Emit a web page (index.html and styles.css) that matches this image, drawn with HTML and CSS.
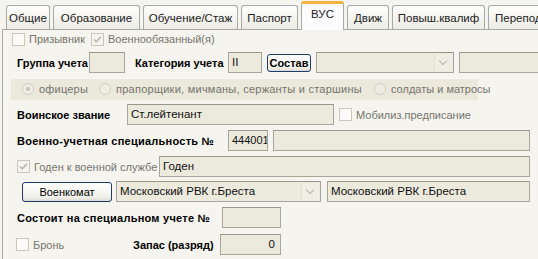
FILE: index.html
```html
<!DOCTYPE html>
<html lang="ru">
<head>
  <meta charset="UTF-8">
  <title>ВУС</title>
  <link rel="stylesheet" href="styles.css">
</head>
<body>
  <div class="tabs">
    <div class="tab tab-a">Общие</div>
    <div class="tab tab-b">Образование</div>
    <div class="tab tab-c">Обучение/Стаж</div>
    <div class="tab tab-d">Паспорт</div>
    <div class="tab tab-e active">ВУС</div>
    <div class="tab tab-f">Движ</div>
    <div class="tab tab-g">Повыш.квалиф</div>
    <div class="tab tab-h">Переподг</div>
  </div>

  <div class="panel">
    <div class="row row-checks">
      <span class="check"></span><span class="dim lbl-conscript">Призывник</span>
      <span class="check checked"><svg viewBox="0 0 11 11"><path d="M2 5.5l2.2 2.3L9 2.8" /></svg></span><span class="dim">Военнообязанный(я)</span>
    </div>

    <div class="row">
      <label class="lbl w-group">Группа учета</label>
      <div class="field w36"></div>
      <label class="lbl w-cat">Категория учета</label>
      <div class="field w34">II</div>
      <button class="btn btn-bold">Состав</button>
      <div class="field select w138 ml5"><span class="arrow"></span></div>
      <div class="field w100 ml5"></div>
    </div>

    <div class="row">
      <div class="radios">
        <span class="radio on"></span><span class="dim r1">офицеры</span>
        <span class="radio"></span><span class="dim r2">прапорщики, мичманы, сержанты и старшины</span>
        <span class="radio"></span><span class="dim">солдаты и матросы</span>
      </div>
    </div>

    <div class="row">
      <label class="lbl w-rank">Воинское звание</label>
      <div class="field w207">Ст.лейтенант</div>
      <span class="check ml5"></span><span class="dim">Мобилиз.предписание</span>
    </div>

    <div class="row">
      <label class="lbl w-vus wide">Военно-учетная специальность №</label>
      <div class="field w40">444001</div>
      <div class="field w257 ml5"></div>
    </div>

    <div class="row">
      <div class="w-fit">
        <span class="check checked"><svg viewBox="0 0 11 11"><path d="M2 5.5l2.2 2.3L9 2.8" /></svg></span><span class="dim">Годен к военной службе</span>
      </div>
      <div class="field w371">Годен</div>
    </div>

    <div class="row row-office">
      <button class="btn btn-office">Военкомат</button>
      <div class="field select w205 ml4">Московский РВК г.Бреста<span class="arrow"></span></div>
      <div class="field w203 ml6">Московский РВК г.Бреста</div>
    </div>

    <div class="row">
      <label class="lbl w-spec wide">Состоит на специальном учете №</label>
      <div class="field w59"></div>
    </div>

    <div class="row row-last">
      <div class="w-armor">
        <span class="check"></span><span class="dim">Бронь</span>
      </div>
      <label class="lbl w-reserve">Запас (разряд)</label>
      <div class="field w61 num">0</div>
    </div>
  </div>
</body>
</html>
```

FILE: styles.css
```css
body { margin: 0; background: #f5f4ee; font-family: "Liberation Sans", Arial, sans-serif; font-size: 11px; color: #000; width: 538px; height: 259px; overflow: hidden; }

.tabs { display: flex; align-items: flex-end; height: 29px; padding-left: 6px; gap: 3px; }
.tab { height: 24px; box-sizing: border-box; border: 1px solid #a5aca5; border-bottom: none; border-radius: 3px 3px 0 0; background: linear-gradient(#fefefd, #ecebe4); display: flex; align-items: center; justify-content: center; color: #222; flex: none; font-size: 11.5px; }
.tab.active { height: 29px; margin-bottom: -1px; background: #fcfcfe; border-top: 3px solid #f2b33d; align-items: flex-start; padding-top: 4px; position: relative; z-index: 1; }
.tab-a { width: 44px; }
.tab-b { width: 87px; }
.tab-c { width: 95px; }
.tab-d { width: 57px; }
.tab-e { width: 43px; }
.tab-f { width: 42px; }
.tab-g { width: 93px; }
.tab-h { width: 70px; justify-content: flex-start; padding-left: 6px; }

.panel { margin-left: 2px; border-top: 1px solid #a5aca5; border-left: 1px solid #a5aca5; height: 229px; background: #f5f4ee; }

.row { display: flex; align-items: center; height: 21px; padding-left: 14px; margin-top: 5px; }
.row-checks { height: 16px; padding-left: 9px; margin-top: 1px; }
.row-office { margin-top: 4px; padding-left: 19px; }
.row-last { padding-left: 13px; margin-top: 6px; }

.lbl { font-weight: bold; white-space: nowrap; flex: none; }
.wide { letter-spacing: 0.25px; }
.w-group { width: 72px; }
.w-cat { width: 93px; margin-left: 10px; }
.w-rank { width: 110px; }
.w-vus { width: 211px; }
.w-spec { width: 205px; }
.w-reserve { width: 87px; }
.w-fit { width: 142px; display: flex; align-items: center; flex: none; }
.w-armor { width: 117px; display: flex; align-items: center; flex: none; }

.dim { color: #75756d; white-space: nowrap; }
.lbl-conscript { margin-right: 7px; }

.field { height: 21px; box-sizing: border-box; border: 1px solid #a7a69c; border-top-color: #98978e; background: #ece9dd; padding: 3px 0 0 3px; white-space: nowrap; overflow: hidden; flex: none; position: relative; color: #111; font-size: 11.5px; }
.num { text-align: right; padding-right: 5px; }
.w34 { width: 34px; }
.w36 { width: 36px; }
.w40 { width: 40px; padding-left: 3px; font-size: 11px; }
.w59 { width: 59px; }
.w61 { width: 61px; }
.w100 { width: 100px; }
.w138 { width: 138px; }
.w203 { width: 203px; }
.w205 { width: 205px; }
.w207 { width: 207px; }
.w257 { width: 257px; }
.w371 { width: 371px; }
.ml4 { margin-left: 4px; }
.ml5 { margin-left: 5px; }
.ml6 { margin-left: 6px; }

.arrow { position: absolute; right: 1px; top: 1px; width: 17px; height: 17px; background: #efede4; border-left: 1px solid #e2dfd3; }
.arrow::after { content: ""; position: absolute; left: 5px; top: 4px; width: 5px; height: 5px; border-right: 1px solid #b8b6ac; border-bottom: 1px solid #b8b6ac; transform: rotate(45deg); }

.btn { font-family: inherit; font-size: 11px; height: 18px; box-sizing: border-box; border: 1px solid #1c3a6b; border-radius: 3px; background: linear-gradient(#ffffff, #f0f0ea 80%, #dcdad0); padding: 0; color: #000; flex: none; }
.btn-bold { font-weight: bold; width: 44px; margin-left: 5px; }
.btn-office { width: 90px; height: 20px; }

.check { width: 13px; height: 13px; box-sizing: border-box; border: 1px solid #c9c7bb; background: #fbfbf8; margin-right: 4px; flex: none; display: inline-flex; }
.check svg { width: 11px; height: 11px; }
.check svg path { fill: none; stroke: #b8b6aa; stroke-width: 1.6; }
.checked { background: #f4f3ee; }
.row-checks .check + .dim { margin-right: 6px; }

.radios { display: flex; align-items: center; width: 467px; height: 22px; box-sizing: border-box; margin-left: -6px; background: #ebe8dc; border-top: 1px solid #f7f6f2; padding-left: 11px; }
.radio { width: 12px; height: 12px; box-sizing: border-box; border: 1px solid #d1cfc4; border-radius: 50%; background: #eeece3; margin-right: 5px; flex: none; position: relative; }
.radio.on::after { content: ""; position: absolute; left: 3px; top: 3px; width: 4px; height: 4px; border-radius: 50%; background: #c4c2b6; }
.r1 { margin-right: 11px; letter-spacing: 0.2px; }
.r2 { margin-right: 12px; letter-spacing: 0.25px; }
```
